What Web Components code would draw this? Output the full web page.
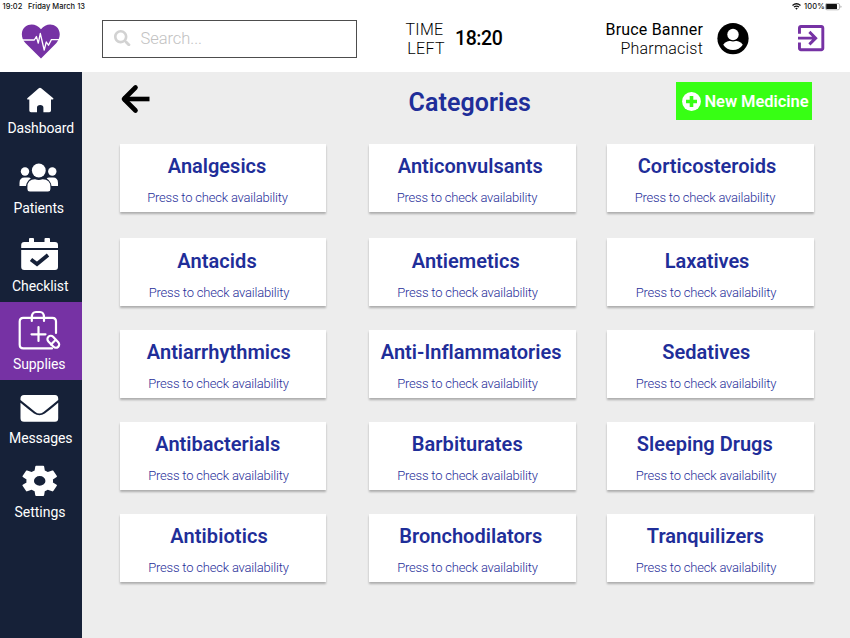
<!DOCTYPE html>
<html lang="en">
<head>
<meta charset="utf-8">
<title>Categories</title>
<style>
html,body{margin:0;height:100%;overflow:hidden}
body{font-family:Roboto,"Liberation Sans",sans-serif;background:#ededed;color:#000}
</style>
</head>
<body>
<pharmacy-app></pharmacy-app>
<script>
// Text whose tracking is adjusted so that it fills the width given in "w".
class FitText extends HTMLElement {
  connectedCallback() {
    const root = this.attachShadow({mode: 'open'});
    const w = parseFloat(this.getAttribute('w'));
    root.innerHTML = `<style>:host{display:block;flex:none;width:${w}px;white-space:nowrap}span{display:inline-block}</style><span><slot></slot></span>`;
    const span = root.querySelector('span');
    const n = this.textContent.length;
    const natural = span.getBoundingClientRect().width;
    span.style.letterSpacing = ((w - natural) / n).toFixed(3) + 'px';
  }
}

class StatusBar extends HTMLElement {
  connectedCallback() {
    this.attachShadow({mode: 'open'}).innerHTML = `
<style>
:host{display:flex;align-items:center;height:12px;padding:1px 8px 0 2.500px;box-sizing:border-box;font:500 7.5px/10px Inter,"Liberation Sans",sans-serif;color:#111}
.day{margin-left:5.500px}
.right{margin-left:auto;display:flex;align-items:center}
.wifi{margin-right:3px}
</style>
<fit-text w="20">19:02</fit-text><fit-text class="day" w="57">Friday March 13</fit-text>
<div class="right">
<svg class="wifi" width="9" height="7" viewBox="0 0 9 7" fill="none" stroke="#111" stroke-width="1.3"><path d="M.5 2.4Q4.5-.9 8.500 2.400M2 4.100Q4.500 2.100 7 4.100"/><path d="M3.200 5.200Q4.500 4.200 5.800 5.200L4.500 6.700Z" fill="#111" stroke="none"/></svg>
<fit-text w="21">100%</fit-text>
<svg width="17" height="8" viewBox="0 0 17 8"><rect x=".5" y=".4" width="14" height="6.400" rx="1.500" fill="none" stroke="#999" stroke-width=".7"/><rect x="1.200" y="1.100" width="10.800" height="5" rx=".5" fill="#111"/><path d="M15.500 2.600v2.200q1-.3 1-1.100t-1-1.100" fill="#999"/></svg>
</div>`;
  }
}

class SearchBox extends HTMLElement {
  connectedCallback() {
    this.attachShadow({mode: 'open'}).innerHTML = `
<style>
:host{display:flex;align-items:center;width:255px;height:38px;box-sizing:border-box;border:1px solid #4d4d4d;padding-left:11px;background:#fff;color:#c2c2c2;font-weight:300;font-size:16.500px;line-height:20px}
svg{margin-top:-2px}
fit-text{margin-left:10px}
</style>
<svg width="16.500" height="16.500" viewBox="0 0 512 512" fill="#d2d2d2"><path d="M505 442.700L405.300 343c-4.500-4.500-10.600-7-17-7H372c27.600-35.300 44-79.700 44-128C416 93.100 322.900 0 208 0S0 93.100 0 208s93.100 208 208 208c48.300 0 92.700-16.400 128-44v16.300c0 6.400 2.500 12.500 7 17l99.700 99.700c9.400 9.400 24.600 9.400 33.900 0l28.300-28.300c9.400-9.400 9.400-24.600.1-34zM208 336c-70.700 0-128-57.200-128-128 0-70.700 57.200-128 128-128 70.700 0 128 57.200 128 128 0 70.700-57.200 128-128 128z"/></svg>
<fit-text w="61.500">Search...</fit-text>`;
  }
}

class AppHeader extends HTMLElement {
  connectedCallback() {
    this.attachShadow({mode: 'open'}).innerHTML = `
<style>
:host{display:block;height:72px;background:#fff;overflow:hidden}
.row{display:flex;align-items:flex-start;height:60px}
.logo{margin:11px 0 0 20px;flex:none}
search-box{margin:8px 0 0 40px;flex:none}
.time{margin:9px 0 0 48.500px;width:41px;font-size:16px;line-height:18.500px;font-weight:300}
.time fit-text+fit-text{margin-left:1.800px}
.clock{margin:14px 0 0 8.500px;font-size:19.500px;line-height:26px;font-weight:500}
.user{margin:9px 0 0 102.500px;width:98.500px;display:flex;flex-direction:column;align-items:flex-end;font-size:16px;line-height:18.500px}
.user fit-text{margin-right:.5px}
.role{font-weight:300}
.avatar{margin:11px 0 0 13px;flex:none}
.exit{margin:13px 0 0 49px;flex:none}
</style>
<status-bar></status-bar>
<div class="row">
<svg class="logo" width="42" height="37" viewBox="20 23 42 37"><path d="M41 58.500L25.600 43.200C20.600 38 20.700 30.300 25.200 26.700C30 22.900 37 24 41 29.300C45 24 51.700 22.900 56.400 26.700C61 30.600 60.800 38 56.200 43.200Z" fill="#7632a4"/><path d="M21 40H34.300L36.400 36.500L38.300 43.200L40.300 33.500L44.200 50L46.300 42L48.500 45.200L51.400 39.600H61" fill="none" stroke="#fff" stroke-width="1.300" stroke-linejoin="round"/></svg>
<search-box></search-box>
<div class="time"><fit-text w="38">TIME</fit-text><fit-text w="37.500">LEFT</fit-text></div>
<fit-text class="clock" w="47.500">18:20</fit-text>
<div class="user"><fit-text w="97.500">Bruce Banner</fit-text><fit-text class="role" w="82.500">Pharmacist</fit-text></div>
<svg class="avatar" width="32" height="32" viewBox="0 0 32 32"><circle cx="16" cy="15.600" r="15.600"/><path d="M6.200 21.800C8 18.800 12 17.500 16 17.500C20 17.500 24 18.800 25.800 21.800C23.500 25.300 20 27 16 27S8.500 25.300 6.200 21.800Z" fill="#fff"/><circle cx="16" cy="11.500" r="7" fill="#000"/><circle cx="16" cy="11.500" r="5.700" fill="#fff"/></svg>
<svg class="exit" width="27" height="27" viewBox="3 3 18.500 18.500" fill="#7632a4"><path d="M10.090 15.590L11.500 17l5-5-5-5-1.410 1.410L12.670 11H3v2h9.670l-2.580 2.590zM19 3H5c-1.110 0-2 .9-2 2v4h2V5h14v14H5v-4H3v4c0 1.100.89 2 2 2h14c1.100 0 2-.9 2-2V5c0-1.100-.9-2-2-2z"/></svg>
</div>`;
  }
}

class NavItem extends HTMLElement {
  connectedCallback() {
    this.attachShadow({mode: 'open'}).innerHTML = `
<style>
:host{display:flex;flex-direction:column;align-items:flex-start;box-sizing:border-box;font-size:14px;line-height:20px;color:#fff}
:host([active]){background:#7632a4}
::slotted(svg){display:block;flex:none}
</style><slot></slot>`;
  }
}

class SideNav extends HTMLElement {
  connectedCallback() {
    this.attachShadow({mode: 'open'}).innerHTML = `
<style>
:host{display:grid;grid-template-rows:78px 76px 76px 78px 74px 1fr;width:82px;background:#162138}
nav-item{overflow:hidden}
</style>
<nav-item><svg width="82" height="46" viewBox="0 72 82 46"><path d="M40 87.800Q40.600 87.800 41.200 88.300L53 98Q54.200 99.200 52.800 99.600H51V110.500Q51 112.200 49.300 112.200H43.400V107.500Q43.400 105 40.200 105T37 107.500V112.200H31Q29.300 112.200 29.300 110.500V99.600H27.600Q26.400 99 27.600 98L38.800 88.300Q39.400 87.800 40 87.800Z" fill="#fff"/></svg><fit-text w="66.500" style="margin-left:7.500px">Dashboard</fit-text></nav-item>
<nav-item><svg width="82" height="48" viewBox="0 150 82 48" fill="#fff"><circle cx="25" cy="171.500" r="4.200"/><circle cx="52.300" cy="171.500" r="4.200"/><path d="M19.500 186V183Q19.500 177.500 24.500 177.500H28.500Q30 177.500 30.800 178.500Q26.500 181.500 26 186ZM58 186V183Q58 177.500 53 177.500H49Q47.500 177.500 46.700 178.500Q51 181.500 51.500 186Z"/><circle cx="38.800" cy="170.500" r="6.900"/><path d="M27.400 189V187Q27.400 179.300 35 179.300Q38.800 180.500 42.600 179.300Q50.400 179.300 50.400 187V189Q50.400 191.500 48 191.500H29.800Q27.400 191.500 27.400 189Z"/></svg><fit-text w="50.500" style="margin-left:13.500px">Patients</fit-text></nav-item>
<nav-item><svg width="82" height="50" viewBox="0 226 82 50" fill="#fff"><path d="M21.200 248V245Q21.200 242 24.200 242H29V239Q29 238 30 238H33Q34 238 34 239V242H44.500V239Q44.500 238 45.500 238H49Q50 238 50 239V242H55Q58 242 58 245V248ZM21.200 250H58V267Q58 270 55 270H24.200Q21.200 270 21.200 267Z"/><path d="M31 259.500L37 264L48 255" fill="none" stroke="#162138" stroke-width="3.800"/></svg><fit-text w="56.500" style="margin-left:12px">Checklist</fit-text></nav-item>
<nav-item active><svg width="82" height="52" viewBox="0 302 82 52" fill="none" stroke="#fff" stroke-width="2.200" stroke-linecap="round" stroke-linejoin="round"><path d="M52 348.400H23.300Q19.700 348.400 19.700 344.800V321.400Q19.700 317.800 23.300 317.800H52.400Q56 317.800 56 321.400V333M31.800 321V317.500Q31.800 312 36 312H40Q44 312 44 317.500V321M31.500 334.300H45.500M38.500 327V341"/><rect x="-7" y="-3.300" width="14" height="6.600" rx="3.300" transform="translate(53.300 341.800) rotate(46)"/><path d="M51 344.500L55.500 340"/></svg><fit-text w="52.500" style="margin-left:13px">Supplies</fit-text></nav-item>
<nav-item><svg width="82" height="48" viewBox="0 380 82 48" fill="#fff"><path d="M20.500 400V398.500Q20.500 395 24 395H55Q58.200 395 58.200 398.500V400Q51 406 43.500 412Q39.400 415 35.300 412Q28 406 20.500 400ZM20.500 402.800Q28 409 34 413.600Q39.400 417 44.800 413.600Q51 409 58.200 402.800V418.300Q58.200 421.800 55 421.800H24Q20.500 421.800 20.500 418.300Z"/></svg><fit-text w="63.500" style="margin-left:9px">Messages</fit-text></nav-item>
<nav-item><svg width="82" height="48" viewBox="0 454 82 48" fill="#fff"><g transform="translate(39.700 480.900) scale(1.850 1.570) translate(-12 -12)"><path fill-rule="evenodd" d="M19.140 12.940c.04-.3.06-.61.06-.94 0-.32-.02-.64-.07-.94l2.030-1.580c.18-.14.23-.41.12-.61l-1.920-3.320c-.12-.22-.37-.29-.59-.22l-2.390.96c-.5-.38-1.030-.7-1.620-.94l-.36-2.540c-.04-.24-.24-.41-.48-.41h-3.840c-.24 0-.43.17-.47.41l-.36 2.540c-.59.24-1.130.57-1.620.94l-2.390-.96c-.22-.08-.47 0-.59.22L2.740 8.870c-.12.21-.08.47.12.61l2.030 1.580c-.05.3-.09.63-.09.94s.02.64.07.94l-2.030 1.580c-.18.14-.23.41-.12.61l1.920 3.320c.12.22.37.29.59.22l2.390-.96c.5.38 1.030.7 1.620.94l.36 2.540c.05.24.24.41.48.41h3.840c.24 0 .44-.17.47-.41l.36-2.540c.59-.24 1.130-.56 1.620-.94l2.390.96c.22.08.47 0 .59-.22l1.920-3.320c.12-.22.07-.47-.12-.61l-2.010-1.580zM12 15.100a3.100 3.100 0 1 1 0-6.200a3.100 3.100 0 1 1 0 6.200z"/></g></svg><fit-text w="51" style="margin-left:14.500px">Settings</fit-text></nav-item>`;
  }
}

class CategoryCard extends HTMLElement {
  connectedCallback() {
    const a = n => this.getAttribute(n);
    this.attachShadow({mode: 'open'}).innerHTML = `
<style>
:host{display:flex;flex-direction:column;align-items:flex-start;box-sizing:border-box;height:68px;padding-top:9px;background:#fff;box-shadow:0 2px 2px rgba(0,0,0,.27);color:#1f2e99}
.name{font-size:20px;line-height:26px;font-weight:600;margin-left:${a('name-x')}px}
.note{font-size:13px;line-height:18px;font-weight:300;margin:10px 0 0 ${a('note-x')}px}
</style>
<fit-text class="name" w="${a('name-w')}">${a('name')}</fit-text>
<fit-text class="note" w="140.500">Press to check availability</fit-text>`;
  }
}

class CategoryGrid extends HTMLElement {
  connectedCallback() {
    // name, left and right edge of the name, left edge of the note
    const left = [120, 369.4, 607.4];
    const items = [
      ['Analgesics',168,266,147.500],['Anticonvulsants',398,542.500,397],['Corticosteroids',638,776,635],
      ['Antacids',177.500,256.500,149],['Antiemetics',412,519.500,397.500],['Laxatives',665,749,636],
      ['Antiarrhythmics',147,290.500,148.500],['Anti-Inflammatories',381,561,397.500],['Sedatives',662.500,750,636],
      ['Antibacterials',155.500,280,148.500],['Barbiturates',412,522.500,397.500],['Sleeping Drugs',637,772.500,636],
      ['Antibiotics',170.500,267.500,148.500],['Bronchodilators',399.500,542,397.500],['Tranquilizers',647,763.500,636]];
    this.attachShadow({mode: 'open'}).innerHTML = `
<style>
:host{display:grid;justify-content:start;grid-template-columns:249.400px 238px 206px;grid-template-rows:94px 92px 92px 92px 68px}
category-card{width:206.400px}
category-card:nth-of-type(n+4):nth-of-type(-n+6){padding-top:10px;height:68.400px}
</style>` + items.map(([n, l, r, s], i) => {
      const x = left[i % 3];
      return `<category-card name="${n}" name-x="${l - x - .2}" name-w="${r - l + .5}" note-x="${s - x - .3}"></category-card>`;
    }).join('');
  }
}

class NewButton extends HTMLElement {
  connectedCallback() {
    this.attachShadow({mode: 'open'}).innerHTML = `
<style>
:host{display:flex;align-items:center;width:136px;height:38px;box-sizing:border-box;padding-left:5.500px;background:#37ff14;color:#fff;font-size:16.500px;line-height:20px;font-weight:600}
fit-text{margin:2px 0 0 4px}
</style>
<svg width="19" height="19" viewBox="0 0 19 19"><circle cx="9.500" cy="9.500" r="9.400" fill="#fff"/><path d="M9.500 4v11M4 9.500h11" stroke="#37ff14" stroke-width="3.600"/></svg>
<fit-text w="104">New Medicine</fit-text>`;
  }
}

class PharmacyApp extends HTMLElement {
  connectedCallback() {
    this.attachShadow({mode: 'open'}).innerHTML = `
<style>
:host{display:grid;grid-template:72px 566px / 82px 768px;width:850px;height:638px}
app-header{grid-column:1/3}
main{background:#ededed;padding:10px 0 0 38px;box-sizing:border-box}
.bar{display:flex;height:62px;align-items:flex-start}
.back{margin:2px 0 0 0;flex:none}
h1{margin:5px 0 0 258.500px;font-size:25px;line-height:32px;font-weight:600;color:#1f2e99}
new-button{margin:0 0 0 145px;flex:none}
</style>
<app-header></app-header>
<side-nav></side-nav>
<main>
<div class="bar">
<svg class="back" width="30" height="30" viewBox="0 0 30 30" fill="none" stroke="#000" stroke-width="4.600" stroke-linejoin="round"><path d="M3 15H29.500" /><path d="M15.500 3.500L4 15L15.500 26.500" stroke-linecap="round"/></svg>
<h1><fit-text w="122.500">Categories</fit-text></h1>
<new-button></new-button>
</div>
<category-grid></category-grid>
</main>`;
  }
}

customElements.define('fit-text', FitText);
customElements.define('status-bar', StatusBar);
customElements.define('search-box', SearchBox);
customElements.define('nav-item', NavItem);
customElements.define('side-nav', SideNav);
customElements.define('app-header', AppHeader);
customElements.define('category-card', CategoryCard);
customElements.define('category-grid', CategoryGrid);
customElements.define('new-button', NewButton);
customElements.define('pharmacy-app', PharmacyApp);
</script>
</body>
</html>
